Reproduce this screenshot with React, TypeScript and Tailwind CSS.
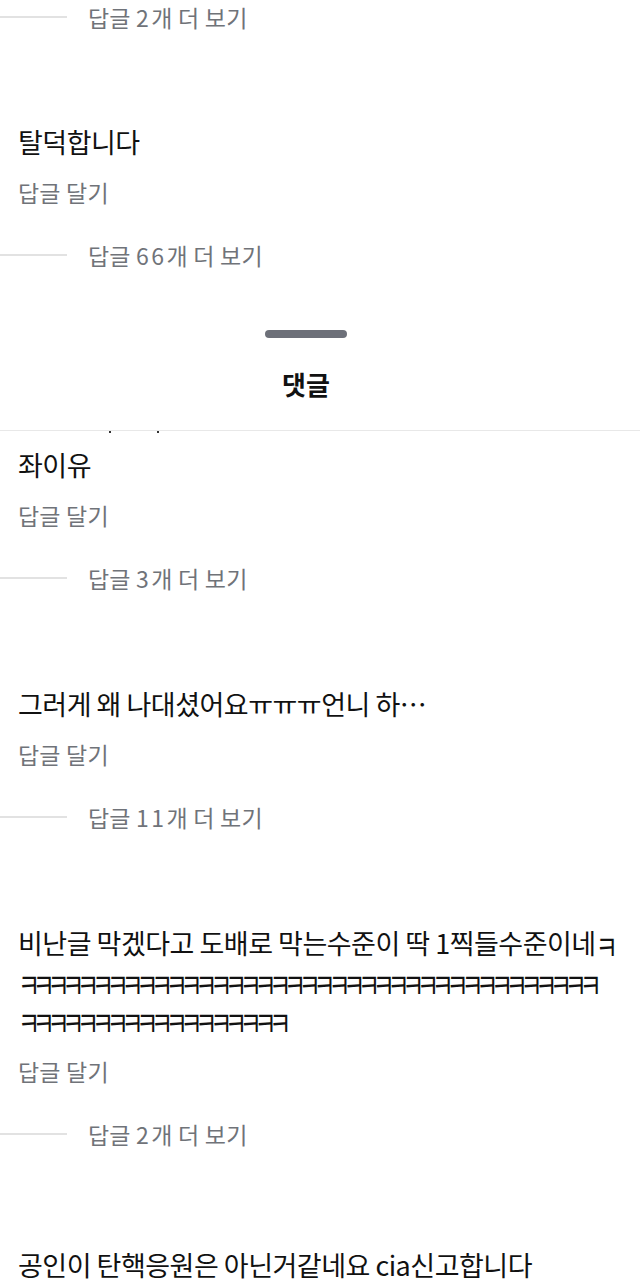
import React from "react";

const FONT = { fontFamily: '"Noto Sans CJK KR", "Noto Sans", sans-serif' };

function ReplyRow({ count, className = "" }: { count: number; className?: string }) {
  return (
    <div className={"flex items-center h-[34px] " + className}>
      <div className="w-[67px] h-[2px] bg-[#e2e2e2]" />
      <span className="ml-[21px] text-[23px] leading-[34px] text-[#707379] tracking-[0.2px]">
        답글 <span className="tracking-[2.5px]">{count}</span>개 더 보기
      </span>
    </div>
  );
}

function ReplyAction() {
  return (
    <div className="mt-[14px] pl-[18px] text-[23px] leading-[34px] text-[#707379] tracking-[0.2px]">
      답글 달기
    </div>
  );
}

function Comment({
  children,
  count,
  pt,
  textClass = "",
}: {
  children: React.ReactNode;
  count: number;
  pt: string;
  textClass?: string;
}) {
  return (
    <div className={"flex flex-col " + pt}>
      <div className={"pl-[18px] text-[27px] leading-[38px] text-[#111111] tracking-[-0.5px] whitespace-nowrap " + textClass}>
        {children}
      </div>
      <ReplyAction />
      <ReplyRow count={count} className="mt-[29px]" />
    </div>
  );
}

const K = "inline-block text-[24px] leading-[24px] tracking-[-7.3px] scale-y-[1.4] translate-y-[3px] origin-[50%_60%]";

export default function App() {
  return (
    <div className="w-[640px] h-[1280px] overflow-hidden bg-white flex flex-col" style={FONT}>
      <ReplyRow count={2} />
      <Comment count={66} pt="pt-[89px]">
        탈덕합니다
      </Comment>

      <div className="w-[612px] flex flex-col items-center mt-[58px]">
        <div className="w-[82px] h-[8px] rounded-full bg-[#6d7079]" />
        <div className="mt-[28px] text-[26px] leading-[36px] font-bold text-[#111111]">댓글</div>
      </div>
      <div className="mt-[28px] border-b border-[#e8e8e8]" />
      <div className="flex h-[2px]">
        <div className="ml-[109px] w-[2px] h-[2px] bg-[#333]" />
        <div className="ml-[46px] w-[2px] h-[2px] bg-[#333]" />
      </div>

      <Comment count={3} pt="pt-[13px]">
        좌이유
      </Comment>
      <Comment count={11} pt="pt-[90px]">
        그러게 왜 나대셨어요ㅠㅠㅠ언니 하…
      </Comment>
      <Comment count={2} pt="pt-[90px]" textClass="pb-[2px]">
        비난글 막겠다고 도배로 막는수준이 딱 1찍들수준이네<span className={K}>ㅋ</span>
        <br />
        <span className={K}>ㅋㅋㅋㅋㅋㅋㅋㅋㅋㅋㅋㅋㅋㅋㅋㅋㅋㅋㅋㅋㅋㅋㅋㅋㅋㅋㅋㅋㅋㅋㅋㅋㅋㅋㅋㅋㅋㅋㅋ</span>
        <br />
        <span className={K}>ㅋㅋㅋㅋㅋㅋㅋㅋㅋㅋㅋㅋㅋㅋㅋㅋㅋㅋ</span>
      </Comment>
      <div className="pt-[99px] pl-[18px] text-[27px] leading-[30px] text-[#111111] tracking-[-0.5px] whitespace-nowrap">
        공인이 탄핵응원은 아닌거같네요 cia신고합니다
      </div>
    </div>
  );
}
